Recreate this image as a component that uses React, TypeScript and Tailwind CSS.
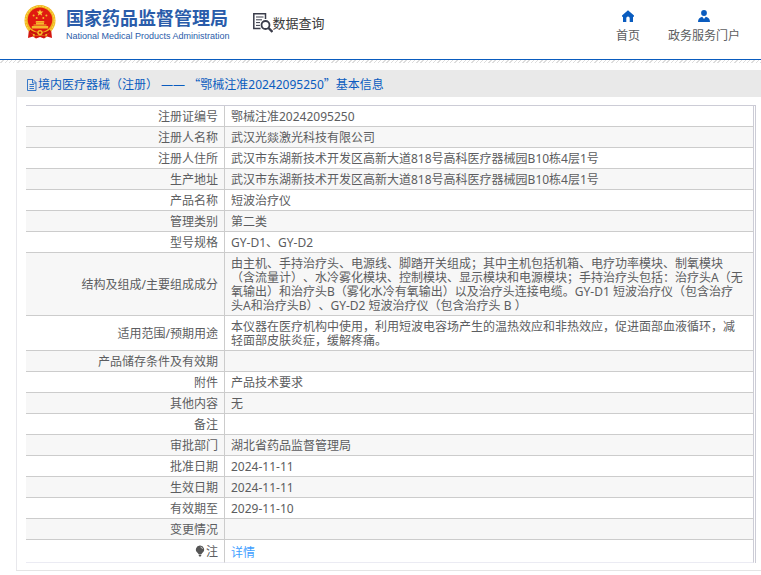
import type { ReactNode } from "react";

type Row = { label: string; value: string };

const rows: Row[] = [
  { label: "注册证编号", value: "鄂械注准20242095250" },
  { label: "注册人名称", value: "武汉光燚激光科技有限公司" },
  { label: "注册人住所", value: "武汉市东湖新技术开发区高新大道818号高科医疗器械园B10栋4层1号" },
  { label: "生产地址", value: "武汉市东湖新技术开发区高新大道818号高科医疗器械园B10栋4层1号" },
  { label: "产品名称", value: "短波治疗仪" },
  { label: "管理类别", value: "第二类" },
  { label: "型号规格", value: "GY-D1、GY-D2" },
  {
    label: "结构及组成/主要组成成分",
    value:
      "由主机、手持治疗头、电源线、脚踏开关组成；其中主机包括机箱、电疗功率模块、制氧模块（含流量计）、水冷雾化模块、控制模块、显示模块和电源模块；手持治疗头包括：治疗头A（无氧输出）和治疗头B（雾化水冷有氧输出）以及治疗头连接电缆。GY-D1 短波治疗仪（包含治疗头A和治疗头B）、GY-D2 短波治疗仪（包含治疗头 B ）",
  },
  {
    label: "适用范围/预期用途",
    value: "本仪器在医疗机构中使用，利用短波电容场产生的温热效应和非热效应，促进面部血液循环，减轻面部皮肤炎症，缓解疼痛。",
  },
  { label: "产品储存条件及有效期", value: "" },
  { label: "附件", value: "产品技术要求" },
  { label: "其他内容", value: "无" },
  { label: "备注", value: "" },
  { label: "审批部门", value: "湖北省药品监督管理局" },
  { label: "批准日期", value: "2024-11-11" },
  { label: "生效日期", value: "2024-11-11" },
  { label: "有效期至", value: "2029-11-10" },
  { label: "变更情况", value: "" },
];

function Emblem() {
  return (
    <svg viewBox="0 0 32 34" className="h-[34px] w-8 shrink-0" aria-hidden="true">
      <path d="M5 24 L4 33 L9 31.5 L12 33.5 L16 32 L20 33.5 L23 31.5 L28 33 L27 24Z" fill="#d3150f" />
      <circle cx="16" cy="15.5" r="15.5" fill="#f0b51f" />
      <circle cx="16" cy="15.5" r="14.3" fill="none" stroke="#f8d648" strokeWidth="1.2" strokeDasharray="2 1" />
      <circle cx="16" cy="14.8" r="12.3" fill="#e01a10" />
      <path d="M16 4.2l.9 2.4h2.5l-2 1.6.8 2.5-2.2-1.5-2.2 1.5.8-2.5-2-1.6h2.5z" fill="#f9cf3a" />
      <g fill="#f5b92c">
        <circle cx="9.6" cy="10.5" r="1" />
        <circle cx="12.7" cy="13" r="1" />
        <circle cx="19.3" cy="13" r="1" />
        <circle cx="22.4" cy="10.5" r="1" />
        <path d="M11 17.2l1.4-1.2h7.2l1.4 1.2zM12 17.6h8v1.6h-8zM9.5 19.4h13v1.2h-13zM7.8 21h16.4v2.4H7.8z" />
      </g>
      <path d="M6 24.5c3 2.6 6 3.2 10 3.2s7-.6 10-3.2l1 2.2c-3 3-6.6 3.8-11 3.8S8 29.7 5 26.7z" fill="#c9130c" />
      <circle cx="16" cy="27.6" r="2.7" fill="#f3bd26" />
      <circle cx="16" cy="27.6" r="1.2" fill="#d3150f" />
      <path d="M8.5 28.5l2.5 1-1 3zM23.5 28.5l-2.5 1 1 3z" fill="#f3bd26" />
    </svg>
  );
}

function QueryIcon() {
  return (
    <svg viewBox="0 0 20 20" className="h-5 w-5 shrink-0" fill="none" stroke="#3a3c4a" aria-hidden="true">
      <path d="M12.5 6V.8H.8v14.7h6.7" strokeWidth="1.5" />
      <path d="M3 4h7.5M3 6.8h6M3 9.6h4M3 12.4h4" strokeWidth="1" />
      <circle cx="12.5" cy="12" r="4" strokeWidth="1.8" />
      <path d="M15.5 15l4 4" strokeWidth="2.4" />
    </svg>
  );
}

function HomeIcon() {
  return (
    <svg viewBox="0 0 12 12" className="h-3 w-3" fill="#0a5cbf" aria-hidden="true">
      <path d="M6 .3L0 5.5V6.7h1V12h3.3V8.2a1.7 1.7 0 0 1 3.4 0V12H11V6.7h1V5.5z" />
    </svg>
  );
}

function UserIcon() {
  return (
    <svg viewBox="0 0 12 12" className="h-3 w-3" fill="#0a5cbf" aria-hidden="true">
      <circle cx="6" cy="3" r="2.9" />
      <path d="M0 12c0-3 1.500-4.600 4.200-5.200L6 9l1.800-2.200C10.500 7.400 12 9 12 12z" />
    </svg>
  );
}

function FileIcon() {
  return (
    <svg viewBox="0 0 12 12" className="h-3 w-3 shrink-0" fill="none" stroke="#0a5cbf" aria-hidden="true">
      <path d="M7 .5H1.500v11h8.500V3.500zM6.500 .5v3.500H10" strokeWidth=".8" />
      <path d="M3.500 5.500h4.500M3.500 7.500h4.500M3.500 9.500h4.500" strokeWidth=".8" />
    </svg>
  );
}

function BulbIcon() {
  return (
    <svg viewBox="0 0 10 12" className="mr-px inline-block h-3 w-[10px] align-[-1px]" aria-hidden="true">
      <path d="M5 .5a4 4 0 0 0-2.500 7.200L3.500 9h3l1-1.300A4 4 0 0 0 5 .5zM3.700 9.500h2.600v1L5.700 11.500H4.300l-.6-1z" fill="#555" />
      <path d="M5.500 2a2.200 2.200 0 0 1 2 2" stroke="#ddd" strokeWidth=".8" fill="none" />
    </svg>
  );
}

function NavItem({ icon, children }: { icon: ReactNode; children: ReactNode }) {
  return (
    <a href="#" className="flex flex-col items-center gap-[5px]">
      {icon}
      <span className="leading-[18px]">{children}</span>
    </a>
  );
}

function InfoRow({ label, children }: { label: ReactNode; children: ReactNode }) {
  return (
    <tr className="even:bg-[#f7f7f7]">
      <th scope="row" className="w-[199px] border-r border-r-[#ccc] pt-1 pr-[6px] pb-[2px] text-right font-normal">
        {label}
      </th>
      <td className="border-r border-r-[#ccccd6] pt-1 pr-[9px] pb-[2px] pl-[6px]">{children}</td>
    </tr>
  );
}

export default function App() {
  return (
    <div
      lang="zh-CN"
      className="bg-white font-['Noto_Sans','Noto_Sans_CJK_SC',sans-serif] text-xs text-[#5c5d60] [text-spacing-trim:space-all]"
    >
      <header className="flex h-[60px] items-start justify-between border-b border-[#0a5cbf] pr-[21px] pl-6">
        <div className="flex items-start pt-[5px]">
          <Emblem />
          <div className="ml-[10px] pt-[2px] whitespace-nowrap text-[#2a5caa]">
            <h1 className="text-lg leading-[22px] font-bold">国家药品监督管理局</h1>
            <p className="font-['Liberation_Sans',sans-serif] text-[9px] leading-[14px]">
              National Medical Products Administration
            </p>
          </div>
          <a href="#" className="ml-[23px] flex items-start pt-2 text-[13px] leading-5 text-[#3a3a3a]">
            <QueryIcon />
            <span>数据查询</span>
          </a>
        </div>
        <nav className="flex gap-7 pt-[10px]">
          <NavItem icon={<HomeIcon />}>首页</NavItem>
          <NavItem icon={<UserIcon />}>政务服务门户</NavItem>
        </nav>
      </header>
      <div className="h-[3px] bg-[repeating-linear-gradient(135deg,#fff_0px,#fff_2px,#ddd_2px,#ddd_3px)]" />

      <main className="mt-[7px] ml-4 border-b border-[#e4e4e4] pb-[7px] shadow-[inset_1px_0_0_#e8e8ec]">
        <h2 className="flex h-[27px] items-center bg-[#e9e9e9] pt-[2px] pl-[10px] text-[#0a5cbf]">
          <FileIcon />
          <span className="whitespace-pre">
            境内医疗器械（注册） —— <span className="font-['Noto_Sans_CJK_SC',sans-serif]">“</span>鄂械注准20242095250
            <span className="font-['Noto_Sans_CJK_SC',sans-serif]">”</span>基本信息
          </span>
        </h2>
        <div className="mt-2 mr-[5px] ml-[10px] border-t border-r border-[#ccccd6] pr-px">
          <table className="w-full table-fixed border-separate border-spacing-0 leading-[14px] [&_td]:border-b [&_td]:border-b-[#ccc] [&_th]:border-b [&_th]:border-b-[#ccc] [&_tr:last-child>*]:border-b-[#ebebf3]">
            <tbody>
              {rows.map((row) => (
                <InfoRow key={row.label} label={row.label}>
                  {row.value || "\u00a0"}
                </InfoRow>
              ))}
              <InfoRow
                label={
                  <>
                    <BulbIcon />注
                  </>
                }
              >
                <a href="#" className="block pt-[2px] text-[#409eff]">
                  详情
                </a>
              </InfoRow>
            </tbody>
          </table>
        </div>
      </main>
    </div>
  );
}
